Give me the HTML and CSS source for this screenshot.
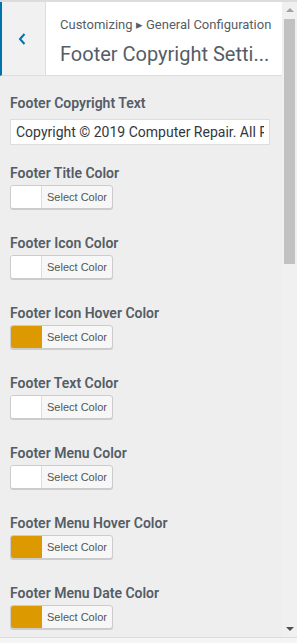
FILE: index.html
```html
<!DOCTYPE html>
<html lang="en">
<head>
    <meta charset="UTF-8">
    <meta name="viewport" content="width=device-width, initial-scale=1.0">
    <title>Footer Copyright Settings</title>
    <link rel="stylesheet" href="styles.css">
</head>
<body>
    <div class="frame">
        <div class="panel">
            <!-- Section header -->
            <div class="section-header">
                <button class="back-btn" aria-label="Back">
                    <svg width="10" height="14" viewBox="0 0 10 14">
                        <path d="M7.5 2 L3 7 L7.5 12" fill="none" stroke="#0073aa" stroke-width="2"/>
                    </svg>
                </button>
                <div class="section-title">
                    <span class="crumb">Customizing &#9656; General Configuration</span>
                    <h3>Footer Copyright Setti...</h3>
                </div>
            </div>

            <div class="controls">
                <div class="control text-control">
                    <label class="control-title">Footer Copyright Text</label>
                    <input type="text" class="text-input" value="Copyright © 2019 Computer Repair. All Rights Reserved.">
                </div>

                <div class="control">
                    <label class="control-title">Footer Title Color</label>
                    <button class="color-btn"><span class="swatch"></span><span class="color-label">Select Color</span></button>
                </div>

                <div class="control">
                    <label class="control-title">Footer Icon Color</label>
                    <button class="color-btn"><span class="swatch"></span><span class="color-label">Select Color</span></button>
                </div>

                <div class="control">
                    <label class="control-title">Footer Icon Hover Color</label>
                    <button class="color-btn"><span class="swatch gold"></span><span class="color-label">Select Color</span></button>
                </div>

                <div class="control">
                    <label class="control-title">Footer Text Color</label>
                    <button class="color-btn"><span class="swatch"></span><span class="color-label">Select Color</span></button>
                </div>

                <div class="control">
                    <label class="control-title">Footer Menu Color</label>
                    <button class="color-btn"><span class="swatch"></span><span class="color-label">Select Color</span></button>
                </div>

                <div class="control">
                    <label class="control-title">Footer Menu Hover Color</label>
                    <button class="color-btn"><span class="swatch gold"></span><span class="color-label">Select Color</span></button>
                </div>

                <div class="control">
                    <label class="control-title">Footer Menu Date Color</label>
                    <button class="color-btn"><span class="swatch gold"></span><span class="color-label">Select Color</span></button>
                </div>
            </div>
        </div>

        <!-- Scrollbar -->
        <div class="scrollbar">
            <span class="arrow up"></span>
            <div class="track"><div class="thumb"></div></div>
            <span class="arrow down"></span>
        </div>
    </div>
    <div class="bottom-bar"></div>
</body>
</html>
```

FILE: styles.css
```css
body {
    font-family: Roboto, "Liberation Sans", Arial, sans-serif;
    margin: 0;
    padding: 0;
    background-color: #f5f5f5;
    overflow: hidden;
}

.frame {
    display: flex;
    height: 635px;
    border-top: 2px solid #dcdcde;
    background-color: #eeeeee;
    overflow: hidden;
}

.panel {
    flex-grow: 1;
    min-width: 0;
    overflow: hidden;
}

.section-header {
    display: flex;
    height: 73px;
    background-color: #fff;
    border-bottom: 1px solid #dddddd;
    border-left: 2px solid #0073aa;
}

.back-btn {
    width: 44px;
    flex-shrink: 0;
    background-color: #f1f1f1;
    border: none;
    border-right: 1px solid #dddddd;
    padding: 0 8px 0 4px;
    display: flex;
    align-items: center;
    justify-content: center;
    cursor: pointer;
}

.section-title {
    padding: 14px 0 0 14px;
    color: #555d66;
    white-space: nowrap;
    overflow: hidden;
}

.crumb {
    display: block;
    font-size: 13px;
    line-height: 18px;
}

.section-title h3 {
    margin: 7px 0 0;
    font-size: 20px;
    font-weight: 400;
    line-height: 26px;
}

.controls {
    padding: 15px 12px 0 10px;
}

.control {
    margin-bottom: 22px;
}

.control.text-control {
    margin-bottom: 16px;
}

.control-title {
    display: block;
    font-size: 14px;
    font-weight: 600;
    line-height: 24px;
    color: #555d66;
    margin-bottom: 0;
}

.text-control .control-title {
    margin-bottom: 4px;
}

.text-input {
    box-sizing: border-box;
    width: 100%;
    height: 26px;
    padding: 0 5px;
    margin: 0;
    border: 1px solid #dddddd;
    background-color: #fff;
    font-family: inherit;
    font-size: 14px;
    color: #32373c;
}

.color-btn {
    display: flex;
    height: 24px;
    padding: 0;
    border: 1px solid #cccccc;
    border-radius: 3px;
    box-shadow: 0 1px 0 #cccccc;
    background-color: #f7f7f7;
    overflow: hidden;
    cursor: pointer;
}

.swatch {
    width: 30px;
    height: 100%;
    background-color: #fff;
    border-right: 1px solid #dddddd;
}

.swatch.gold {
    background-color: #dd9900;
    border-right-color: #dd9900;
}

.color-label {
    padding: 0 5px;
    line-height: 22px;
    font-family: inherit;
    font-size: 11px;
    color: #555555;
}

.scrollbar {
    width: 15px;
    flex-shrink: 0;
    display: flex;
    flex-direction: column;
    align-items: center;
    background-color: #f0f0f0;
}

.arrow {
    width: 0;
    height: 0;
    border-left: 4px solid transparent;
    border-right: 4px solid transparent;
}

.arrow.up {
    margin: 6px 0 5px;
    border-bottom: 4px solid #a3a3a3;
}

.arrow.down {
    margin: 5px 0 6px;
    border-top: 4px solid #505050;
}

.track {
    flex-grow: 1;
    width: 100%;
    padding: 2px 2px 0;
    box-sizing: border-box;
}

.thumb {
    height: 245px;
    background-color: #c1c1c1;
}

.bottom-bar {
    border-top: 1px solid #dcdcde;
    height: 10px;
}
```
